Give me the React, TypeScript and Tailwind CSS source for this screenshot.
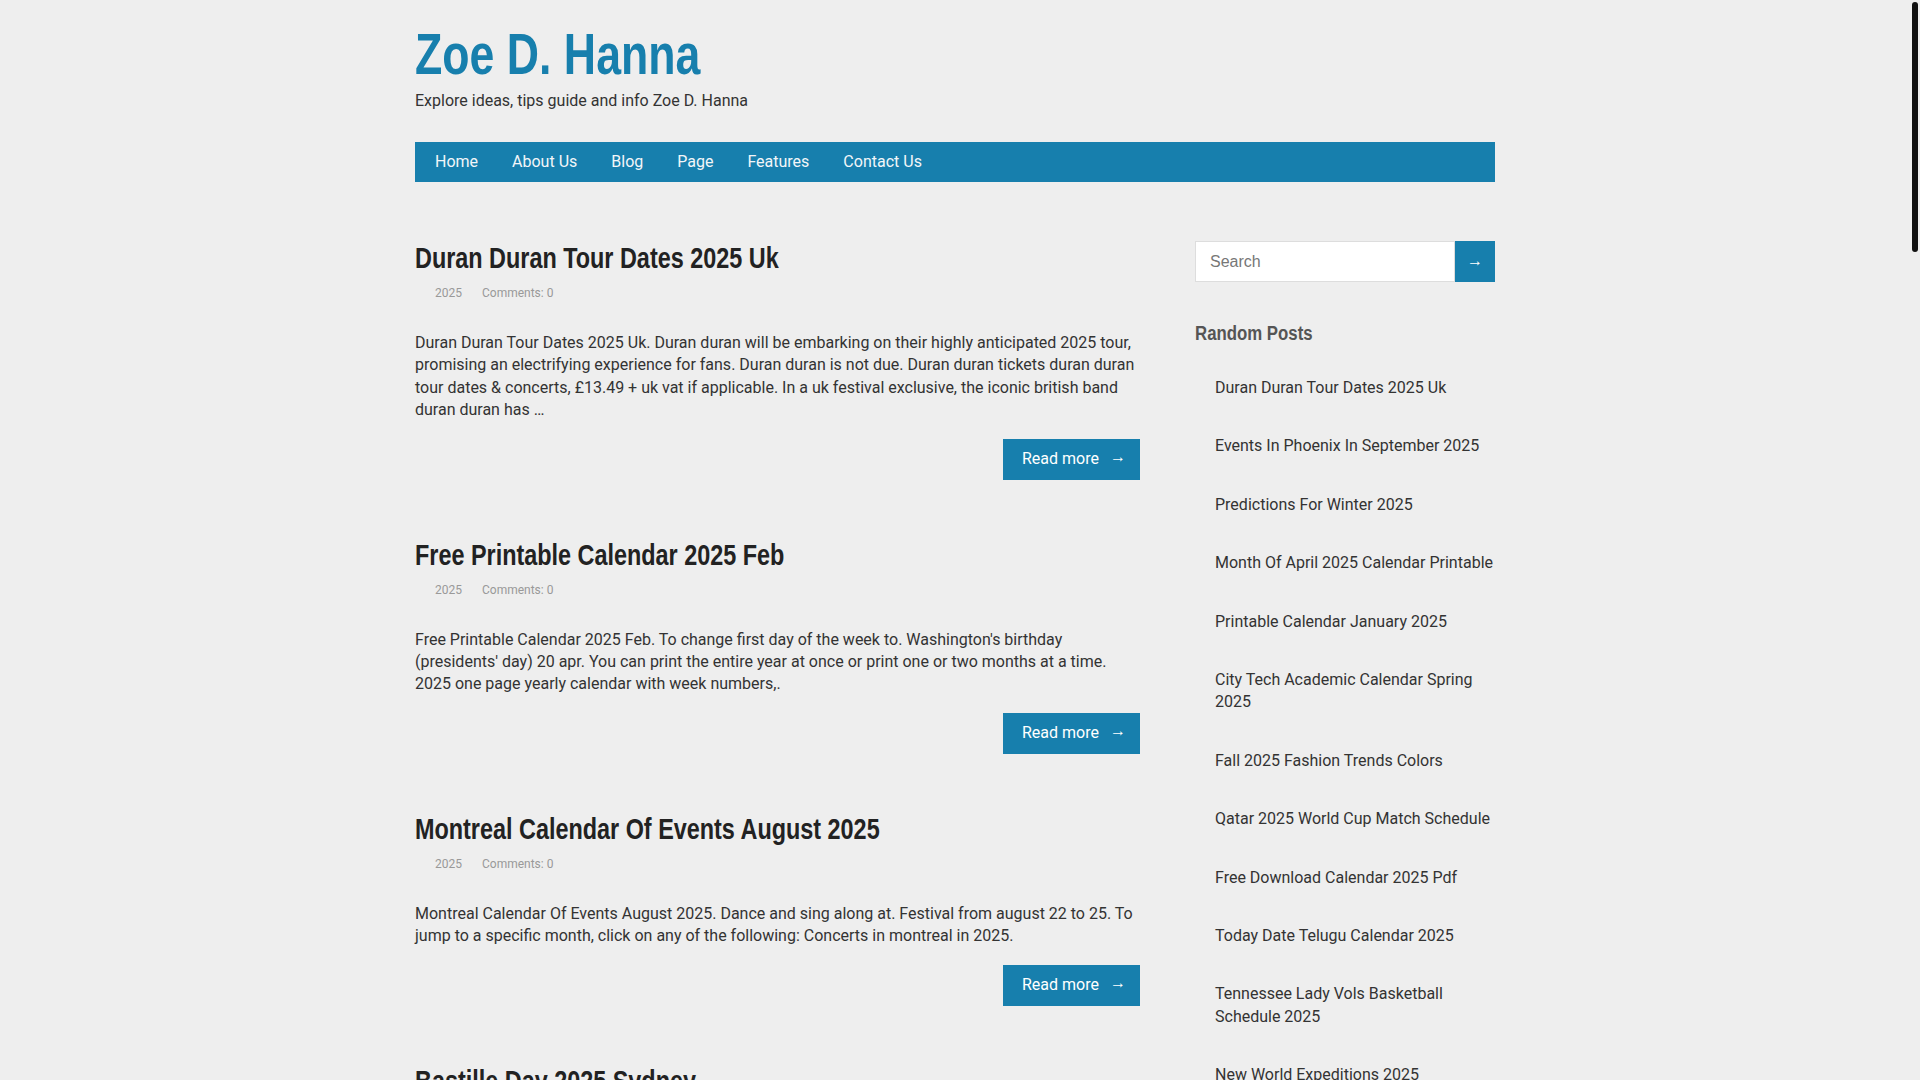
import React from "react";

const posts = [
  {
    title: "Duran Duran Tour Dates 2025 Uk",
    excerpt:
      "Duran Duran Tour Dates 2025 Uk. Duran duran will be embarking on their highly anticipated 2025 tour, promising an electrifying experience for fans. Duran duran is not due. Duran duran tickets duran duran tour dates & concerts, £13.49 + uk vat if applicable. In a uk festival exclusive, the iconic british band duran duran has …",
  },
  {
    title: "Free Printable Calendar 2025 Feb",
    excerpt:
      "Free Printable Calendar 2025 Feb. To change first day of the week to. Washington's birthday (presidents' day) 20 apr. You can print the entire year at once or print one or two months at a time. 2025 one page yearly calendar with week numbers,.",
  },
  {
    title: "Montreal Calendar Of Events August 2025",
    excerpt:
      "Montreal Calendar Of Events August 2025. Dance and sing along at. Festival from august 22 to 25. To jump to a specific month, click on any of the following: Concerts in montreal in 2025.",
  },
  {
    title: "Bastille Day 2025 Sydney",
    excerpt:
      "Bastille Day 2025 Sydney. Celebrate the french national day with food, wine, music and entertainment. The festival returns to the rocks in july with markets, live performances and family activities for all ages.",
  },
];

const randomPosts = [
  "Duran Duran Tour Dates 2025 Uk",
  "Events In Phoenix In September 2025",
  "Predictions For Winter 2025",
  "Month Of April 2025 Calendar Printable",
  "Printable Calendar January 2025",
  "City Tech Academic Calendar Spring 2025",
  "Fall 2025 Fashion Trends Colors",
  "Qatar 2025 World Cup Match Schedule",
  "Free Download Calendar 2025 Pdf",
  "Today Date Telugu Calendar 2025",
  "Tennessee Lady Vols Basketball Schedule 2025",
  "New World Expeditions 2025",
  "Bastille Day 2025 Sydney",
];

const navItems = ["Home", "About Us", "Blog", "Page", "Features", "Contact Us"];

function Post({ title, excerpt }: { title: string; excerpt: string }) {
  return (
    <article className="mb-[57px]">
      <h2 className="font-['Liberation_Sans',sans-serif] font-bold text-[30px] leading-[36px] text-[#222]">
        <a href="#" className="inline-block origin-left scale-x-[0.78] whitespace-nowrap">
          {title}
        </a>
      </h2>
      <div className="mt-[8px] flex pl-5 text-[12px] leading-[18px] text-[#999]">
        <span>2025</span>
        <span className="ml-5">Comments: 0</span>
      </div>
      <p className="mt-[30px] text-[16px] leading-[22.4px] text-[#333]">{excerpt}</p>
      <div className="mt-[17px] flex justify-end">
        <a
          href="#"
          className="flex h-[41px] w-[137px] items-center gap-[11px] bg-[#177fad] pl-[19px] text-[16px] text-white"
        >
          Read more <span className="-translate-y-[2px] text-[16px] leading-none">→</span>
        </a>
      </div>
    </article>
  );
}

export default function App() {
  return (
    <div className="min-h-screen bg-[#eeeeee] font-['Roboto',sans-serif] text-[#333]">
      {/* browser scrollbar thumb as seen in the shot */}
      <div className="fixed right-[2px] top-[2px] h-[250px] w-[6px] rounded-full bg-[#111]" />
      <div className="w-[1910px]">
        <div className="mx-auto w-[1080px]">
          {/* Header */}
          <header className="pt-5">
            <h1 className="font-['Liberation_Sans',sans-serif] font-bold text-[58px] leading-[67px] text-[#177fad]">
              <a href="#" className="inline-block origin-left scale-x-[0.77] whitespace-nowrap">
                Zoe D. Hanna
              </a>
            </h1>
            <p className="mt-[3px] text-[16px] leading-[22px] text-[#333]">
              Explore ideas, tips guide and info Zoe D. Hanna
            </p>
          </header>

          {/* Nav */}
          <nav className="mt-[30px] flex h-10 items-center bg-[#177fad] pl-[3px]">
            {navItems.map((item) => (
              <a key={item} href="#" className="px-[17px] text-[16px] leading-10 text-[#f2f6f9]">
                {item}
              </a>
            ))}
          </nav>

          {/* Content */}
          <div className="mt-[58px] flex justify-between">
            <main className="w-[725px]">
              {posts.map((p) => (
                <Post key={p.title} {...p} />
              ))}
            </main>

            <aside className="mt-[1px] w-[300px]">
              <form className="flex h-[41px]" onSubmit={(e) => e.preventDefault()}>
                <input
                  type="text"
                  placeholder="Search"
                  className="h-full min-w-0 flex-1 border border-[#dddddd] bg-white px-[14px] font-['Liberation_Sans',sans-serif] text-[16px] text-[#333] outline-none placeholder:text-[#777]"
                />
                <button type="submit" className="flex h-full w-10 items-center justify-center bg-[#177fad] text-white">
                  <span className="-translate-y-[1px] text-[16px] leading-none">→</span>
                </button>
              </form>

              <h3 className="mt-[37px] font-['Liberation_Sans',sans-serif] font-bold text-[20px] leading-[28px] text-[#555]">
                <span className="inline-block origin-left scale-x-[0.84] whitespace-nowrap">Random Posts</span>
              </h3>
              <ul className="mt-[12px]">
                {randomPosts.map((t) => (
                  <li key={t} className="py-[18px] pl-5 text-[16px] leading-[22.4px] text-[#333]">
                    <a href="#">{t}</a>
                  </li>
                ))}
              </ul>
            </aside>
          </div>
        </div>
      </div>
    </div>
  );
}
